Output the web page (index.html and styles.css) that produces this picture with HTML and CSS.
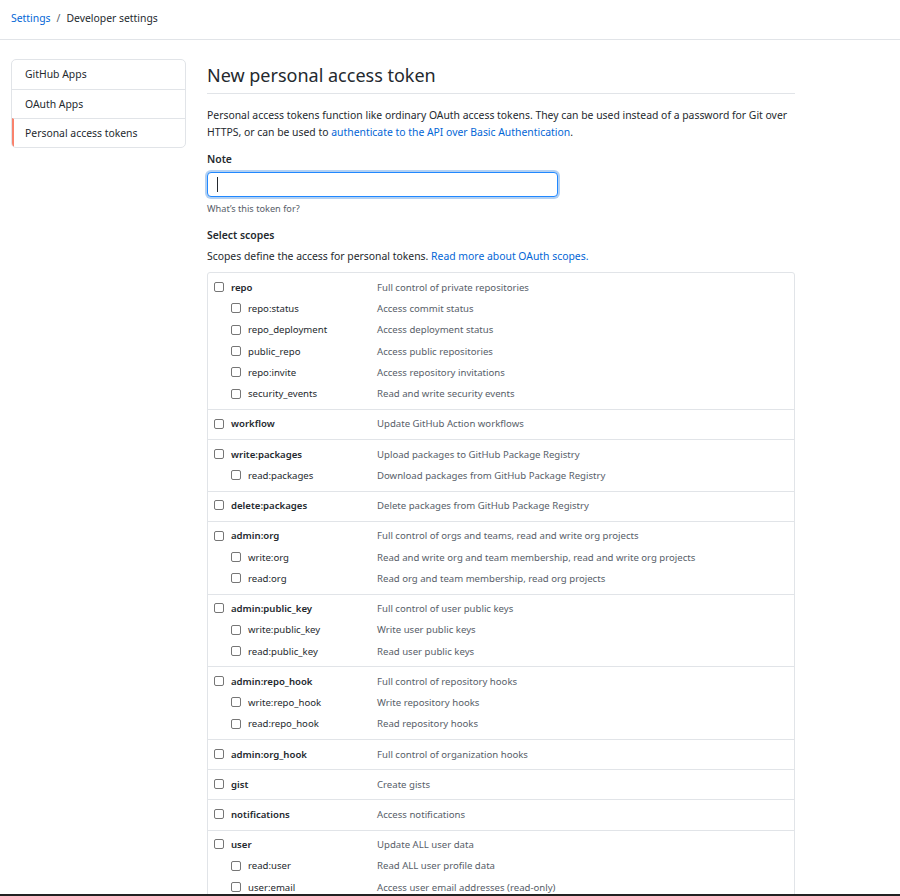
FILE: index.html
```html
<!DOCTYPE html>
<html lang="en">
<head>
    <meta charset="UTF-8">
    <meta name="viewport" content="width=device-width, initial-scale=1.0">
    <title>New personal access token</title>
    <link rel="stylesheet" href="styles.css">
</head>
<body>
    <header class="page-head">
        <nav class="breadcrumb">
            <a href="#">Settings</a>
            <span class="sep">/</span>
            <span>Developer settings</span>
        </nav>
    </header>

    <div class="layout">
        <nav class="menu">
            <a class="menu-item" href="#">GitHub Apps</a>
            <a class="menu-item" href="#">OAuth Apps</a>
            <a class="menu-item selected" href="#">Personal access tokens</a>
        </nav>

        <main class="main">
            <h2 class="subhead">New personal access token</h2>

            <p class="intro">
                Personal access tokens function like ordinary OAuth access tokens. They can be used instead of a password for Git over
                HTTPS, or can be used to <a href="#">authenticate to the API over Basic Authentication</a>.
            </p>

            <div class="form-group">
                <label class="form-label" for="note">Note</label>
                <div class="input-wrap">
                    <input class="form-control" id="note" type="text">
                    <span class="caret"></span>
                </div>
                <p class="hint">What’s this token for?</p>
            </div>

            <div class="form-group scopes-group">
                <div class="form-label">Select scopes</div>
                <p class="scopes-intro">Scopes define the access for personal tokens. <a href="#">Read more about OAuth scopes.</a></p>

                <div class="scopes">
                    <!-- repo -->
                    <div class="scope">
                        <div class="scope-row parent"><label class="scope-name"><input type="checkbox">repo</label><span class="scope-desc">Full control of private repositories</span></div>
                        <div class="scope-row"><label class="scope-name"><input type="checkbox">repo:status</label><span class="scope-desc">Access commit status</span></div>
                        <div class="scope-row"><label class="scope-name"><input type="checkbox">repo_deployment</label><span class="scope-desc">Access deployment status</span></div>
                        <div class="scope-row"><label class="scope-name"><input type="checkbox">public_repo</label><span class="scope-desc">Access public repositories</span></div>
                        <div class="scope-row"><label class="scope-name"><input type="checkbox">repo:invite</label><span class="scope-desc">Access repository invitations</span></div>
                        <div class="scope-row"><label class="scope-name"><input type="checkbox">security_events</label><span class="scope-desc">Read and write security events</span></div>
                    </div>

                    <div class="scope">
                        <div class="scope-row parent"><label class="scope-name"><input type="checkbox">workflow</label><span class="scope-desc">Update GitHub Action workflows</span></div>
                    </div>

                    <div class="scope">
                        <div class="scope-row parent"><label class="scope-name"><input type="checkbox">write:packages</label><span class="scope-desc">Upload packages to GitHub Package Registry</span></div>
                        <div class="scope-row"><label class="scope-name"><input type="checkbox">read:packages</label><span class="scope-desc">Download packages from GitHub Package Registry</span></div>
                    </div>

                    <div class="scope">
                        <div class="scope-row parent"><label class="scope-name"><input type="checkbox">delete:packages</label><span class="scope-desc">Delete packages from GitHub Package Registry</span></div>
                    </div>

                    <div class="scope">
                        <div class="scope-row parent"><label class="scope-name"><input type="checkbox">admin:org</label><span class="scope-desc">Full control of orgs and teams, read and write org projects</span></div>
                        <div class="scope-row"><label class="scope-name"><input type="checkbox">write:org</label><span class="scope-desc">Read and write org and team membership, read and write org projects</span></div>
                        <div class="scope-row"><label class="scope-name"><input type="checkbox">read:org</label><span class="scope-desc">Read org and team membership, read org projects</span></div>
                    </div>

                    <div class="scope">
                        <div class="scope-row parent"><label class="scope-name"><input type="checkbox">admin:public_key</label><span class="scope-desc">Full control of user public keys</span></div>
                        <div class="scope-row"><label class="scope-name"><input type="checkbox">write:public_key</label><span class="scope-desc">Write user public keys</span></div>
                        <div class="scope-row"><label class="scope-name"><input type="checkbox">read:public_key</label><span class="scope-desc">Read user public keys</span></div>
                    </div>

                    <div class="scope">
                        <div class="scope-row parent"><label class="scope-name"><input type="checkbox">admin:repo_hook</label><span class="scope-desc">Full control of repository hooks</span></div>
                        <div class="scope-row"><label class="scope-name"><input type="checkbox">write:repo_hook</label><span class="scope-desc">Write repository hooks</span></div>
                        <div class="scope-row"><label class="scope-name"><input type="checkbox">read:repo_hook</label><span class="scope-desc">Read repository hooks</span></div>
                    </div>

                    <div class="scope">
                        <div class="scope-row parent"><label class="scope-name"><input type="checkbox">admin:org_hook</label><span class="scope-desc">Full control of organization hooks</span></div>
                    </div>

                    <div class="scope">
                        <div class="scope-row parent"><label class="scope-name"><input type="checkbox">gist</label><span class="scope-desc">Create gists</span></div>
                    </div>

                    <div class="scope">
                        <div class="scope-row parent"><label class="scope-name"><input type="checkbox">notifications</label><span class="scope-desc">Access notifications</span></div>
                    </div>

                    <div class="scope">
                        <div class="scope-row parent"><label class="scope-name"><input type="checkbox">user</label><span class="scope-desc">Update ALL user data</span></div>
                        <div class="scope-row"><label class="scope-name"><input type="checkbox">read:user</label><span class="scope-desc">Read ALL user profile data</span></div>
                        <div class="scope-row"><label class="scope-name"><input type="checkbox">user:email</label><span class="scope-desc">Access user email addresses (read-only)</span></div>
                    </div>
                </div>
            </div>
        </main>
    </div>

    <div class="window-edge"></div>
</body>
</html>
```

FILE: styles.css
```css
html {
    overflow: hidden;
}

body {
    margin: 0;
    font-family: 'Noto Sans', 'Open Sans', sans-serif;
    font-size: 10.4px;
    line-height: 16.8px;
    color: #24292e;
    background: #fff;
}

a {
    color: #0366d6;
    text-decoration: none;
}

/* header / breadcrumb */

.page-head {
    height: 39px;
    border-bottom: 1px solid #e1e4e8;
    padding: 0 11px;
    display: flex;
    align-items: center;
}

.breadcrumb {
    display: flex;
    gap: 6px;
    margin-top: -3px;
}

.breadcrumb .sep {
    color: #586069;
}

/* page columns */

.layout {
    display: flex;
    align-items: flex-start;
    gap: 21px;
    padding: 19px 11px 0;
}

.menu {
    width: 173px;
    flex: none;
    border: 1px solid #e1e4e8;
    border-radius: 5px;
    overflow: hidden;
}

.menu-item {
    display: block;
    height: 29px;
    line-height: 29px;
    padding-left: 13px;
    color: #24292e;
    border-top: 1px solid #e1e4e8;
    box-sizing: border-box;
}

.menu-item:first-child {
    border-top: 0;
}

.menu-item.selected {
    border-left: 2px solid #f9826c;
    padding-left: 11px;
}

.main {
    width: 588px;
}

.subhead {
    margin: 2px 0 0;
    padding-bottom: 4px;
    font-size: 18px;
    line-height: 28px;
    font-weight: 400;
    border-bottom: 1px solid #e1e4e8;
}

.intro {
    margin: 13px 0 0;
}

.form-group {
    margin-top: 10.4px;
}

.form-label {
    display: block;
    font-weight: 600;
}

.input-wrap {
    position: relative;
    width: 351px;
    margin-top: 4.6px;
}

.form-control {
    display: block;
    box-sizing: border-box;
    width: 100%;
    height: 25px;
    margin: 0;
    padding: 0 8px;
    border: 1px solid #2188ff;
    border-radius: 4px;
    box-shadow: 0 0 0 2px rgba(3, 102, 214, 0.3);
    outline: none;
    font: inherit;
}

.caret {
    position: absolute;
    left: 10px;
    top: 5px;
    width: 1px;
    height: 15px;
    background: #24292e;
}

.hint {
    margin: 5px 0 0;
    font-size: 9.2px;
    line-height: 14px;
    color: #586069;
}

.scopes-group {
    margin-top: 10.6px;
}

.scopes-intro {
    margin: 4.2px 0 0;
}

/* scopes table */

.scopes {
    margin-top: 7.6px;
    border: 1px solid #e1e4e8;
    border-radius: 3px;
    font-size: 9.6px;
}

.scope {
    padding: 4.2px 0 3.7px 6px;
    border-top: 1px solid #e1e4e8;
}

.scope:first-child {
    border-top: 0;
}

.scope-row {
    display: grid;
    grid-template-columns: 163px 1fr;
    align-items: center;
    height: 21.3px;
}

.scope-name {
    display: flex;
    align-items: center;
    gap: 7px;
    padding-left: 17px;
}

.scope-row.parent .scope-name {
    padding-left: 0;
    font-weight: 600;
}

.scope-desc {
    color: #586069;
}

.scope-name input {
    appearance: none;
    -webkit-appearance: none;
    width: 10px;
    height: 10px;
    margin: 0 0 2px;
    border: 1px solid #767676;
    border-radius: 2px;
    background: #fff;
    flex: none;
}

.window-edge {
    position: fixed;
    left: 0;
    right: 0;
    bottom: 0;
    height: 2px;
    background: #222;
}
```
